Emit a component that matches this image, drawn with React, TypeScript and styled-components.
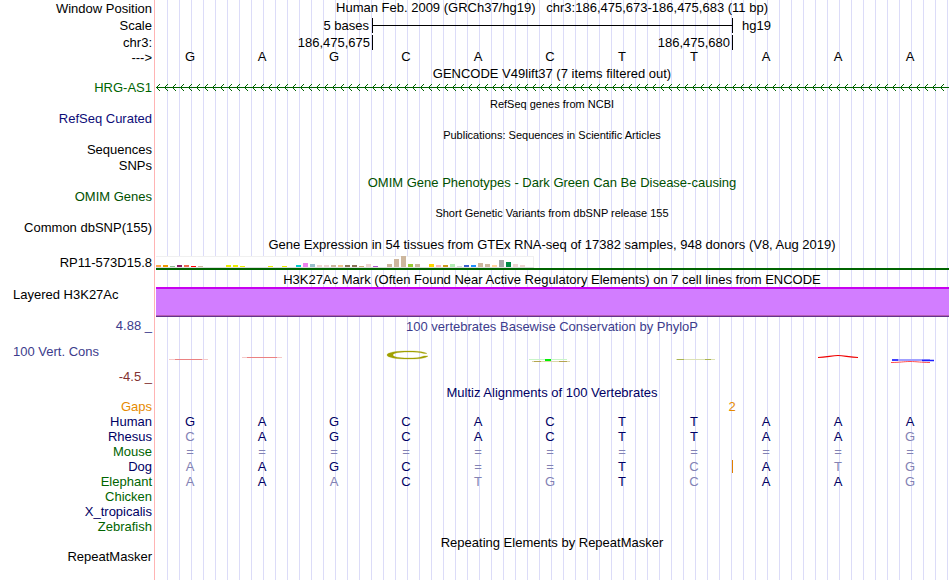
import styled, { createGlobalStyle } from "styled-components";

const GlobalStyle = createGlobalStyle`
  body {
    margin: 0;
    background-color: white;
  }
`;

// page with the blue guide lines and the pink divider behind every track
const Page = styled.main`
  box-sizing: border-box;
  min-height: 100vh;
  padding-right: 1px;
  color: black;
  font-family: "Liberation Sans", Arial, Helvetica, sans-serif;
  font-size: 13px;
  line-height: 13px;
  white-space: nowrap;
  background-image: linear-gradient(#ffb4b4, #ffb4b4),
    repeating-linear-gradient(
      to right,
      #dcdcf8 0px,
      #dcdcf8 1px,
      transparent 1px,
      transparent 12px
    );
  background-repeat: no-repeat;
  background-position: 154px 0, 167px 0;
  background-size: 1px 100%, 100% 100%;
`;

const Row = styled.div<{ $height?: number }>`
  display: grid;
  grid-template-columns: 154px minmax(0, 1fr);
  align-items: start;
  min-height: ${({ $height = 15 }) => $height}px;
`;

const HeaderRow = styled(Row)`
  align-items: center;
  line-height: 15px;
`;

const Label = styled.div<{ $color?: string }>`
  grid-column: 1;
  padding-right: 2px;
  text-align: right;
  color: ${({ $color = "black" }) => $color};
`;

const SideLabel = styled(Label)`
  padding-left: 13px;
  line-height: 15px;
  text-align: left;
`;

const ChartLabel = styled(Label)`
  align-self: end;
  line-height: 15px;
`;

const Title = styled.div<{ $color?: string; $small?: boolean }>`
  grid-column: 2;
  align-self: end;
  padding-left: 1px;
  text-align: center;
  line-height: 15px;
  color: ${({ $color = "black" }) => $color};
  font-size: ${({ $small }) => ($small ? 11 : 13)}px;
`;

const PositionTitle = styled(Title)`
  align-self: start;
`;

// styles for the scale
const Ruler = styled.div`
  display: grid;
  grid-template-columns: 3fr 5fr 3fr;
  padding: 0 1px 0 2px;
`;
const RulerText = styled.div`
  padding-right: 3px;
  text-align: right;
`;
const ScaleBar = styled.div`
  border-left: 1px solid black;
  background: linear-gradient(black, black) 0 7px / 100% 1px no-repeat;
`;
const ScaleEnd = styled.div`
  padding-left: 9px;
  border-left: 1px solid black;
`;
const Coordinate = styled.div`
  padding-right: 2px;
  text-align: right;
`;
const Tick = styled(Coordinate)`
  border-left: 1px solid black;
`;
// end of scale styles

// styles for the bases
const Bases = styled.div`
  display: grid;
  grid-template-columns: repeat(11, minmax(0, 1fr));
  align-self: start;
  padding-right: 3px;
  line-height: 13px;
  text-align: center;
`;
const Base = styled.span<{ $color: string; $insert?: boolean }>`
  color: ${({ $color }) => $color};
  background: ${({ $insert }) =>
    $insert
      ? "linear-gradient(#e08000, #e08000) 2px 0 / 1px 100% no-repeat"
      : "none"};
`;
const GapCounts = styled(Ruler)`
  grid-template-columns: 15fr 2fr 5fr;
`;
const GapCount = styled.span`
  grid-column: 2;
  text-align: center;
  color: #e68a00;
`;
// end of bases styles

const GeneLine = styled.svg`
  display: block;
  box-sizing: border-box;
  width: 100%;
  height: 13px;
  padding-left: 2px;
`;

const Expression = styled.div`
  align-self: end;
  margin-left: 2px;
  border-bottom: 2px solid #006400;
`;
const ExpressionChart = styled.svg`
  display: block;
  background-color: white;
`;

const HistoneBand = styled.div`
  box-sizing: border-box;
  height: 30px;
  margin-left: 2px;
  border-top: 2px solid #c800f0;
  border-bottom: 1px solid #64328c;
  background-color: #d27dff;
  box-shadow: inset 0 -1px #b45fb4;
`;

const Conservation = styled.div`
  display: grid;
  grid-template-columns: 154px minmax(0, 1fr);
  grid-template-rows: 17px 34px 17px;
  align-items: center;
`;
const Logos = styled(Bases)`
  grid-column: 2;
  align-self: end;
`;
const Logo = styled.svg`
  display: block;
  width: 100%;
  height: 22px;
`;

const NAVY = "#000064";
const FADED = "#8282b4";
const GREEN = "#006400";
const OMIM_GREEN = "#005000";
const PURPLE = "#3c3c8c";

const POSITIONS = "GAGCACTTAAA";

type Species = {
  name: string;
  color: string;
  bases?: string;
  insert?: number;
};

const SPECIES: Species[] = [
  { name: "Human", color: NAVY, bases: "GAGCACTTAAA" },
  { name: "Rhesus", color: NAVY, bases: "CAGCACTTAAG" },
  { name: "Mouse", color: GREEN, bases: "===========" },
  { name: "Dog", color: NAVY, bases: "AAGC==TCATG", insert: 8 },
  { name: "Elephant", color: GREEN, bases: "AAACTGTCAAG" },
  { name: "Chicken", color: GREEN },
  { name: "X_tropicalis", color: NAVY },
  { name: "Zebrafish", color: GREEN },
];

// [tissue index, bar height, colour]
const TISSUES: [number, number, string][] = [
  [0, 2, "#ffa54f"],
  [1, 2, "#ee9a00"],
  [2, 1, "#8fbc8f"],
  [3, 2, "#8b1c62"],
  [4, 2, "#ee6a50"],
  [5, 1, "#ff0000"],
  [6, 1, "#cdb79e"],
  [10, 2, "#eeee00"],
  [11, 2, "#eeee00"],
  [12, 1, "#eeee00"],
  [16, 1, "#eeee00"],
  [18, 1, "#eeee00"],
  [20, 2, "#00cdcd"],
  [21, 4, "#ee82ee"],
  [22, 3, "#9ac0cd"],
  [23, 2, "#eed5d2"],
  [24, 2, "#eed5d2"],
  [25, 2, "#cdb79e"],
  [26, 2, "#eec591"],
  [27, 2, "#8b7355"],
  [28, 2, "#8b7355"],
  [29, 1, "#cdaa7d"],
  [30, 3, "#eed5d2"],
  [31, 1, "#b452cd"],
  [33, 3, "#cdb79e"],
  [34, 8, "#cdb79e"],
  [35, 11, "#cdb79e"],
  [36, 3, "#9acd32"],
  [37, 3, "#cdb79e"],
  [39, 3, "#ffd700"],
  [40, 2, "#ffb6c1"],
  [41, 2, "#cd9b1d"],
  [42, 3, "#b4eeb4"],
  [43, 1, "#d9d9d9"],
  [44, 2, "#3a5fcd"],
  [45, 2, "#1e90ff"],
  [46, 4, "#cdb79e"],
  [47, 3, "#cdb79e"],
  [48, 2, "#ffd39b"],
  [49, 7, "#a6a6a6"],
  [50, 5, "#008b45"],
  [51, 3, "#eed5d2"],
  [52, 2, "#eed5d2"],
];

/* Flattened sequence logo letters, one entry per position */
const LOGOS = [
  <>
    <path d="M15 13.5H54" stroke="#f5c8c8" />
    <path d="M21 13.5H48" stroke="#eb8282" />
  </>,
  <>
    <path d="M16 11.5H56" stroke="#f5c8c8" />
    <path d="M21 11.5H51" stroke="#eb8282" />
  </>,
  null,
  <path
    d="M57 7.5C53 5.5 46 5 38 5C26 5 17 6.5 17 9C17 11.5 26 13 38 13C47 13 56 12.5 58 10L54 10C50 11.7 45 12 38 12C29 12 23 11 23 9C23 7 29 6 38 6C45 6 50 6.4 54 7.5Z"
    fill="#a0a000"
    stroke="#a0a000"
    strokeWidth="0.3"
  />,
  null,
  <>
    <path d="M15 13.5H53" stroke="#c8f5c8" />
    <path d="M18 15.5H56" stroke="#dcd7aa" />
    <path d="M20 15.5H27M45 15.5H53" stroke="#b4a550" />
    <path d="M31 14H37" stroke="#00f000" strokeWidth="2" />
  </>,
  null,
  <>
    <path d="M18 13.5H57" stroke="#dce1b4" />
    <path d="M19 13.5H26M47 13.5H53" stroke="#aab450" />
  </>,
  null,
  <path
    d="M16 11.5C24 11.5 30 9.5 36 9.5C42 9.5 48 11.5 56 11.5"
    fill="none"
    stroke="#f00000"
    strokeWidth="1.2"
  />,
  <>
    <path d="M18 13.5H56M18 14.5H60" stroke="#a0a0ff" />
    <path d="M18 14H24M48 14.5H60" stroke="#1e1eff" strokeWidth="1.5" />
    <path
      d="M17 16.5C26 16.5 30 15.5 36 15.5C43 15.5 47 16.5 56 16.5"
      fill="none"
      stroke="#ff5050"
    />
  </>,
];

const Alignment = ({ name, color, bases = "", insert }: Species) => {
  return (
    <Row>
      <Label $color={color}>{name}</Label>
      <Bases>
        {bases.split("").map((base, i) => (
          <Base
            key={i}
            $color={base === POSITIONS[i] ? NAVY : FADED}
            $insert={i === insert}
          >
            {base}
          </Base>
        ))}
      </Bases>
    </Row>
  );
};

type TrackTitleProps = {
  children: string;
  color?: string;
  small?: boolean;
  height?: number;
};

const TrackTitle = ({
  children,
  color,
  small,
  height = 16,
}: TrackTitleProps) => (
  <Row $height={height}>
    <Title $color={color} $small={small}>
      {children}
    </Title>
  </Row>
);

const App = () => {
  return (
    <>
      <GlobalStyle />
      <Page>
        <HeaderRow $height={16}>
          <Label>Window Position</Label>
          <PositionTitle>
            Human Feb. 2009 (GRCh37/hg19) &nbsp; chr3:186,475,673-186,475,683
            (11 bp)
          </PositionTitle>
        </HeaderRow>
        <HeaderRow $height={18}>
          <Label>Scale</Label>
          <Ruler>
            <RulerText>5 bases</RulerText>
            <ScaleBar />
            <ScaleEnd>hg19</ScaleEnd>
          </Ruler>
        </HeaderRow>
        <HeaderRow $height={16}>
          <Label>chr3:</Label>
          <Ruler>
            <Coordinate>186,475,675</Coordinate>
            <Tick>186,475,680</Tick>
            <Tick />
          </Ruler>
        </HeaderRow>
        <HeaderRow $height={15}>
          <Label>---&gt;</Label>
          <Bases>
            {POSITIONS.split("").map((base, i) => (
              <Base key={i} $color="black">
                {base}
              </Base>
            ))}
          </Bases>
        </HeaderRow>

        <TrackTitle>GENCODE V49lift37 (7 items filtered out)</TrackTitle>
        <Row>
          <Label $color={GREEN}>HRG-AS1</Label>
          <GeneLine shapeRendering="crispEdges">
            <defs>
              <pattern
                id="strand"
                y="3"
                width="8"
                height="7"
                patternUnits="userSpaceOnUse"
              >
                <path
                  d="M0 3h8v1H0zM1 2h1v1H1zM2 1h1v1H2zM3 0h1v1H3zM1 4h1v1H1zM2 5h1v1H2zM3 6h1v1H3z"
                  fill="#006400"
                />
              </pattern>
            </defs>
            <rect y="3" width="100%" height="7" fill="url(#strand)" />
          </GeneLine>
        </Row>

        <TrackTitle small>RefSeq genes from NCBI</TrackTitle>
        <Row>
          <Label $color="#0c0c78">RefSeq Curated</Label>
        </Row>

        <TrackTitle small>
          Publications: Sequences in Scientific Articles
        </TrackTitle>
        <Row $height={16}>
          <Label>Sequences</Label>
        </Row>
        <Row>
          <Label>SNPs</Label>
        </Row>

        <TrackTitle color={OMIM_GREEN}>
          OMIM Gene Phenotypes - Dark Green Can Be Disease-causing
        </TrackTitle>
        <Row>
          <Label $color={OMIM_GREEN}>OMIM Genes</Label>
        </Row>

        <TrackTitle small>
          Short Genetic Variants from dbSNP release 155
        </TrackTitle>
        <Row>
          <Label>Common dbSNP(155)</Label>
        </Row>

        <TrackTitle>
          Gene Expression in 54 tissues from GTEx RNA-seq of 17382 samples, 948
          donors (V8, Aug 2019)
        </TrackTitle>
        <Row $height={18}>
          <ChartLabel>RP11-573D15.8</ChartLabel>
          <Expression>
            <ExpressionChart
              width="378"
              height="12"
              shapeRendering="crispEdges"
            >
              <path d="M0 0.5H377.5V11" fill="none" stroke="#f0f0f0" />
              <path d="M0 11.5H378" stroke="#dcdcdc" />
              {TISSUES.map(([index, height, color]) => (
                <rect
                  key={index}
                  x={index * 7}
                  y={11 - height}
                  width="5"
                  height={height}
                  fill={color}
                />
              ))}
            </ExpressionChart>
          </Expression>
        </Row>

        <TrackTitle height={17}>
          H3K27Ac Mark (Often Found Near Active Regulatory Elements) on 7 cell
          lines from ENCODE
        </TrackTitle>
        <Row>
          <SideLabel>Layered H3K27Ac</SideLabel>
          <HistoneBand />
        </Row>

        <Conservation>
          <Label $color={PURPLE}>4.88 _</Label>
          <Title $color={PURPLE}>
            100 vertebrates Basewise Conservation by PhyloP
          </Title>
          <SideLabel $color={PURPLE}>100 Vert. Cons</SideLabel>
          <Logos>
            {LOGOS.map((letter, i) => (
              <Logo key={i} viewBox="0 0 72 22" preserveAspectRatio="none">
                {letter}
              </Logo>
            ))}
          </Logos>
          <Label $color="#823232">-4.5 _</Label>
        </Conservation>

        <TrackTitle color={NAVY} height={15}>
          Multiz Alignments of 100 Vertebrates
        </TrackTitle>
        <Row>
          <Label $color="#e68a00">Gaps</Label>
          <GapCounts>
            <GapCount>2</GapCount>
          </GapCounts>
        </Row>
        {SPECIES.map((species) => (
          <Alignment key={species.name} {...species} />
        ))}

        <TrackTitle height={15}>Repeating Elements by RepeatMasker</TrackTitle>
        <Row>
          <Label>RepeatMasker</Label>
        </Row>
      </Page>
    </>
  );
};

export default App;
